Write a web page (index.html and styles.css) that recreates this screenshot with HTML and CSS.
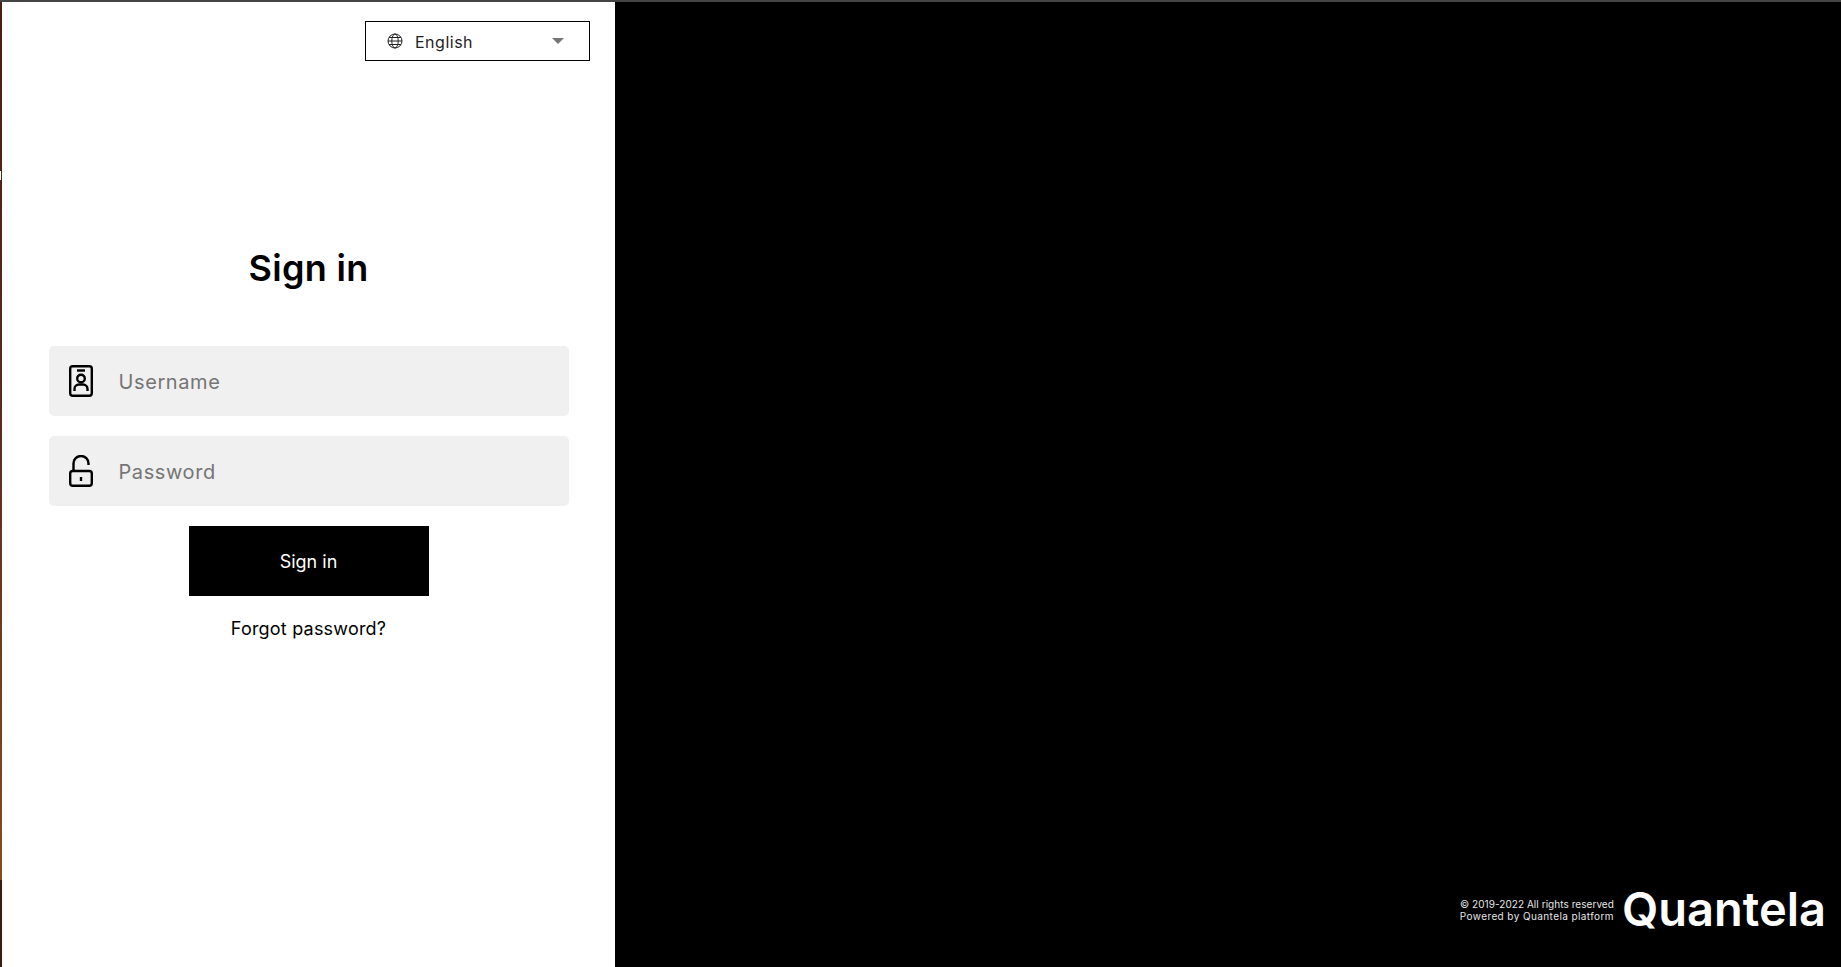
FILE: index.html
```html
<!DOCTYPE html>
<html>
  <head>
    <title>Sign in</title>
    <link rel="stylesheet" href="styles.css">
  </head>
  <body>
    <div class="topLine"></div>
    <div class="page">
      <div class="edgeLine"><div class="edgeNib"></div></div>
      <div class="loginPanel">
        <div class="langRow">
          <div class="langSelect">
            <svg class="globeIcon" viewBox="0 0 16 16" fill="none" stroke="#222" stroke-width="1">
              <circle cx="8" cy="8" r="7"/>
              <ellipse cx="8" cy="8" rx="3.2" ry="7"/>
              <path d="M1 8h14M2 4.5h12M2 11.5h12"/>
            </svg>
            <span class="langName">English</span>
            <span class="caret"></span>
          </div>
        </div>
        <h1 class="loginTitle">Sign in</h1>
        <form class="loginForm">
          <div class="field">
            <svg class="fieldIcon" viewBox="0 0 24 32" fill="none" stroke="#000" stroke-width="2.4">
              <rect x="1.2" y="1.2" width="21.600" height="29.600" rx="2.500"/>
              <path d="M8 5.500h8"/>
              <circle cx="12" cy="13.500" r="3.800"/>
              <path d="M5.500 26v-2a4.500 4.500 0 0 1 4.500-4.500h4a4.500 4.500 0 0 1 4.500 4.500v2"/>
            </svg>
            <input class="fieldInput" type="text" placeholder="Username">
          </div>
          <div class="field">
            <svg class="fieldIcon" viewBox="0 0 24 32" fill="none" stroke="#000" stroke-width="2.4">
              <rect x="1.2" y="16" width="21.600" height="14.800" rx="2.500"/>
              <path d="M4.500 16V8.500a7.500 7.500 0 0 1 15 0V10"/>
              <path d="M12 22v4"/>
            </svg>
            <input class="fieldInput" type="password" placeholder="Password">
          </div>
          <button class="signInBtn" type="button">Sign in</button>
          <a class="forgotLink" href="#">Forgot password?</a>
        </form>
      </div>
      <div class="brandPanel">
        <div class="brandFooter">
          <div class="copyText">
            <div class="copyLine">© 2019-2022 All rights reserved</div>
            <div class="poweredLine">Powered by Quantela platform</div>
          </div>
          <div class="brandName">Quantela</div>
        </div>
      </div>
    </div>
  </body>
</html>
```

FILE: styles.css
```css
html, body {
  height: 100%;
}
body {
  margin: 0;
  background-color: #000;
  font-family: Inter, "Noto Sans", sans-serif;
  overflow: hidden;
}
.topLine {
  height: 2px;
  background-color: #444;
}
.page {
  display: flex;
  height: 965px;
}
.edgeLine {
  width: 2px;
  background: linear-gradient(to bottom, #4a1c14 0, #5a2a20 400px, #8a4a1a 878px, #3a1a12 878px);
}
.edgeNib {
  width: 1px;
  height: 9px;
  margin-top: 169px;
  background-color: #fff;
}
.loginPanel {
  width: 613px;
  background-color: #fff;
  display: flex;
  flex-direction: column;
  align-items: center;
}
.langRow {
  width: 100%;
  display: flex;
  justify-content: flex-end;
  padding: 19px 25px 0 0;
  box-sizing: border-box;
}
.langSelect {
  width: 225px;
  height: 40px;
  border: 1px solid #000;
  box-sizing: border-box;
  display: flex;
  align-items: center;
  padding: 0 25px 0 21px;
}
.globeIcon {
  width: 16px;
  height: 16px;
}
.langName {
  margin-left: 12px;
  padding-top: 2px;
  font-size: 16px;
  letter-spacing: 0.5px;
  color: #222;
  flex: 1;
}
.caret {
  width: 0;
  height: 0;
  border-left: 6px solid transparent;
  border-right: 6px solid transparent;
  border-top: 6px solid #757575;
}
.loginTitle {
  margin: 182px 0 0 0;
  font-size: 36px;
  line-height: 50px;
  letter-spacing: 0.3px;
  font-weight: 600;
  color: #000;
}
.loginForm {
  width: 520px;
  margin-top: 53px;
  display: flex;
  flex-direction: column;
  align-items: center;
}
.field {
  width: 100%;
  height: 70px;
  margin-bottom: 20px;
  background-color: #f0f0f0;
  border-radius: 5px;
  display: flex;
  align-items: center;
  padding-left: 20px;
  box-sizing: border-box;
}
.fieldIcon {
  width: 24px;
  height: 32px;
}
.fieldInput {
  flex: 1;
  margin-left: 26px;
  padding: 2px 0 0 0;
  border: none;
  outline: none;
  background: transparent;
  font-family: inherit;
  font-size: 20px;
  letter-spacing: 0.6px;
  color: #000;
}
.fieldInput::placeholder {
  color: #757575;
  opacity: 1;
}
.signInBtn {
  width: 240px;
  height: 70px;
  border: none;
  background-color: #000;
  color: #fff;
  font-family: inherit;
  font-size: 18px;
}
.forgotLink {
  margin-top: 21px;
  font-size: 18px;
  line-height: 24px;
  letter-spacing: 0.2px;
  color: #000;
  text-decoration: none;
}
.brandPanel {
  flex: 1;
  background-color: #000;
  display: flex;
  justify-content: flex-end;
  align-items: flex-end;
}
.brandFooter {
  display: flex;
  align-items: center;
  gap: 8px;
  padding: 0 15px 36px 0;
}
.copyText {
  font-size: 10px;
  line-height: 12px;
  color: #e6e6e6;
  text-align: right;
  padding-top: 2px;
}
.copyLine {
  letter-spacing: 0.05px;
}
.poweredLine {
  letter-spacing: 0.4px;
}
.brandName {
  font-size: 47px;
  line-height: 44px;
  font-weight: 600;
  color: #fff;
}
```
